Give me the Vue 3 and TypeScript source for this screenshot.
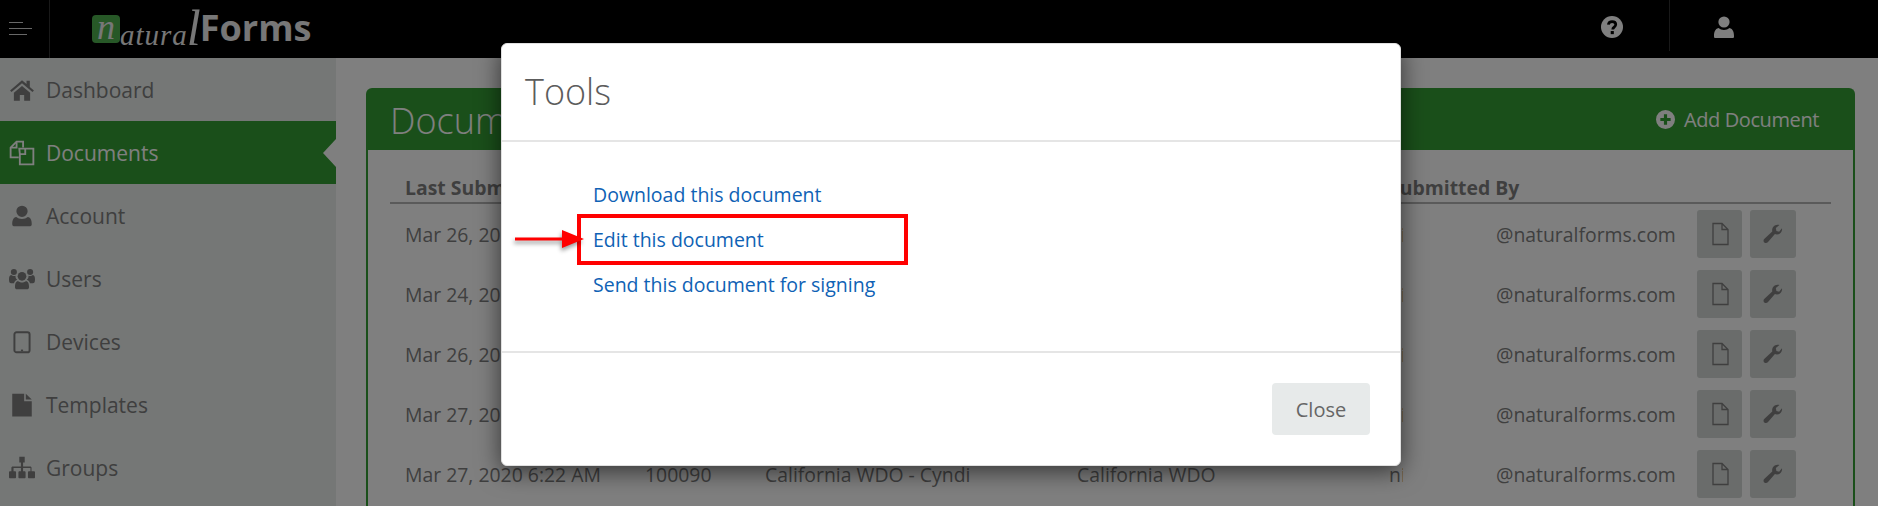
<script setup lang="ts">
interface NavItem {
  label: string
  icon: string
  active?: boolean
}

const navItems: NavItem[] = [
  { label: 'Dashboard', icon: 'home' },
  { label: 'Documents', icon: 'files', active: true },
  { label: 'Account', icon: 'user' },
  { label: 'Users', icon: 'users' },
  { label: 'Devices', icon: 'tablet' },
  { label: 'Templates', icon: 'file' },
  { label: 'Groups', icon: 'sitemap' },
]

const rows = [
  { date: 'Mar 26, 2020 9:14 AM', id: '100112', name: 'California WDO - Cyndi', template: 'California WDO' },
  { date: 'Mar 24, 2020 3:41 PM', id: '100104', name: 'California WDO - Cyndi', template: 'California WDO' },
  { date: 'Mar 26, 2020 8:07 AM', id: '100098', name: 'California WDO - Cyndi', template: 'California WDO' },
  { date: 'Mar 27, 2020 7:35 AM', id: '100093', name: 'California WDO - Cyndi', template: 'California WDO' },
  { date: 'Mar 27, 2020 6:22 AM', id: '100090', name: 'California WDO - Cyndi', template: 'California WDO' },
]
</script>

<template>
  <div class="page">
    <header class="topbar">
      <div class="burger">
        <span class="line short"></span>
        <span class="line"></span>
        <span class="line mid"></span>
      </div>
      <div class="logo">
        <span class="logo-n">n</span><span class="logo-script">atura<span class="logo-l">l</span></span><span class="logo-forms">Forms</span>
      </div>
      <div class="top-right">
        <svg class="help" viewBox="0 0 24 24">
          <circle cx="12" cy="12" r="12" fill="currentColor" />
          <path d="M8 9.400c.3-2.300 2-3.400 4.100-3.400 2.300 0 4 1.400 4 3.400 0 2.700-3.300 2.800-3.300 5.200" fill="none" stroke="#000" stroke-width="3" />
          <rect x="10.600" y="16.400" width="3.400" height="3.400" fill="#000" />
        </svg>
        <div class="top-user">
          <svg class="user-icon" viewBox="0 0 20 22">
            <circle cx="10" cy="6" r="5.600" fill="currentColor" />
            <path d="M1 22c-1 0-1-1-1-2 0-4 1-7 4.500-8 1.500 1.300 3.300 2 5.500 2s4-.7 5.500-2c3.500 1 4.500 4 4.500 8 0 1 0 2-1 2z" fill="currentColor" />
          </svg>
        </div>
      </div>
    </header>

    <div class="body">
      <aside class="sidebar">
        <a v-for="item in navItems" :key="item.label" class="nav-item" :class="{ active: item.active }">
          <svg class="nav-icon" viewBox="0 0 24 24">
            <path v-if="item.icon === 'home'" d="M12 3 1 12.400l1.300 1.500L12 5.800l9.700 8.100 1.300-1.500-3.800-3.200V3.500h-3v3zM4.500 14.500V22h5.500v-5.500h4V22h5.500v-7.500L12 8.200z" fill="currentColor" />
            <g v-else-if="item.icon === 'files'" fill="none" stroke="currentColor" stroke-width="1.700">
              <path d="M9 16H1.500V7L7 1.500h6V7" />
              <path d="M9.500 8H16l6.500 0V22.500H10V13z" />
              <path d="M7 2v5H2M15 8v5H10" />
            </g>
            <path v-else-if="item.icon === 'user'" d="M12 2.500a5.200 5.200 0 1 1 0 10.400 5.200 5.200 0 0 1 0-10.400zM5.500 21.500c-1.800 0-2.500-.8-2.500-2 0-3.500.8-6 3.700-6.600 1.400 1.200 3.200 1.800 5.300 1.800s3.900-.6 5.300-1.800c2.900.6 3.700 3.100 3.700 6.600 0 1.200-.7 2-2.500 2z" fill="currentColor" />
            <g v-else-if="item.icon === 'users'" fill="currentColor">
              <circle cx="12" cy="9.500" r="4" />
              <circle cx="4.500" cy="5.500" r="2.800" />
              <circle cx="19.500" cy="5.500" r="2.800" />
              <path d="M7.500 21.500c-1.200 0-2-.7-2-1.900 0-3 .6-5.300 2.800-5.800 1 .9 2.300 1.400 3.700 1.400s2.700-.5 3.700-1.400c2.200.5 2.800 2.800 2.800 5.800 0 1.200-.8 1.900-2 1.900z" />
              <path d="M0 12.500c0-2.500.4-4 2-4.300.7.700 1.600 1 2.500 1 .6 0 1 0 1.500-.2-.2 1.700.6 3 1.600 3.800-1.500.6-2.500 1.500-3 3.200H2c-1.300 0-2-.8-2-3.500z" />
              <path d="M24 12.500c0-2.500-.4-4-2-4.300-.7.700-1.600 1-2.500 1-.6 0-1 0-1.500-.2.200 1.700-.6 3-1.600 3.800 1.500.6 2.500 1.500 3 3.200h2.600c1.300 0 2-.8 2-3.500z" />
            </g>
            <g v-else-if="item.icon === 'tablet'">
              <rect x="5" y="3" width="14" height="18.500" rx="2" fill="none" stroke="currentColor" stroke-width="1.800" />
              <rect x="11" y="19" width="2" height="1.500" fill="currentColor" />
            </g>
            <path v-else-if="item.icon === 'file'" d="M3 1.500h11v7h7v14H3zM15.500 1.500 21 7h-5.500z" fill="currentColor" />
            <path v-else-if="item.icon === 'sitemap'" d="M9.500 1.500h5v5.500h-1.500v3.500h6.500c.8 0 1.300.5 1.300 1.300v3.200H23c.6 0 1 .4 1 1v4.500c0 .6-.4 1-1 1h-4.500c-.6 0-1-.4-1-1V16c0-.6.4-1 1-1h1.300v-3H13v3h1.300c.6 0 1 .4 1 1v4.500c0 .6-.4 1-1 1H9.700c-.6 0-1-.4-1-1V16c0-.6.4-1 1-1H11v-3H4.200v3h1.300c.6 0 1 .4 1 1v4.500c0 .6-.4 1-1 1H1c-.6 0-1-.4-1-1V16c0-.6.4-1 1-1h1.200v-3.200c0-.8.5-1.300 1.300-1.300H11V7H9.500z" fill="currentColor" />
          </svg>
          <span>{{ item.label }}</span>
        </a>
      </aside>

      <main class="main">
        <section class="card">
          <div class="card-head">
            <h1>Documents</h1>
            <a class="add-doc">
              <svg class="plus" viewBox="0 0 24 24">
                <path d="M12 0a12 12 0 1 1 0 24 12 12 0 0 1 0-24zM10 5.500v4.500H5.500v4H10v4.500h4V14h4.500v-4H14V5.500z" fill="currentColor" fill-rule="evenodd" />
              </svg>
              Add Document
            </a>
          </div>
          <div class="card-body">
            <div class="table-head">
              <span>Last Submitted</span>
              <span>Form ID</span>
              <span>Name</span>
              <span>Template</span>
              <span>Submitted By</span>
            </div>
            <div v-for="row in rows" :key="row.id" class="table-row">
              <span>{{ row.date }}</span>
              <span>{{ row.id }}</span>
              <span>{{ row.name }}</span>
              <span>{{ row.template }}</span>
              <span class="by"><span class="by-name">ni</span>@naturalforms.com</span>
              <span class="actions">
                <button class="act">
                  <svg class="act-icon" viewBox="0 0 20 24">
                    <path d="M3 1.500h9l6 6v15H3zM12 1.500v6h6" fill="none" stroke="currentColor" stroke-width="1.300" />
                  </svg>
                </button>
                <button class="act wide">
                  <svg class="act-icon" viewBox="0 0 24 24">
                    <path d="M21.800 5.600c.6 3.600-1.800 6.900-5.600 6.900-.8 0-1.500-.2-2.100-.4L6.300 21c-1 1.100-2.700 1.200-3.800.2-1.100-1-1.100-2.700-.1-3.800l8.800-8.100c-.7-3.600 1.600-7 5.800-7.300.7 0 1.400.1 2 .3l-3.900 3.100.6 3.200 3 1z" fill="currentColor" />
                  </svg>
                </button>
              </span>
            </div>
          </div>
        </section>
      </main>
    </div>

    <div class="backdrop"></div>

    <div class="modal">
      <div class="modal-head">Tools</div>
      <div class="modal-body">
        <a class="tool-link">Download this document</a>
        <a class="tool-link">Edit this document</a>
        <a class="tool-link">Send this document for signing</a>
        <div class="mark-box"></div>
        <svg class="mark-arrow" viewBox="0 0 70 24">
          <path d="M0 10.500h47V3l22 9-22 9v-7.500H0z" fill="#f00" />
        </svg>
      </div>
      <div class="modal-foot">
        <button class="close-btn">Close</button>
      </div>
    </div>
  </div>
</template>

<style>
html,
body {
  margin: 0;
  overflow: hidden;
}
</style>

<style scoped>
.page {
  position: relative;
  height: 100vh;
  overflow: hidden;
  background: #fff;
  color: #7e7e7e;
  font-family: 'Open Sans', 'Liberation Sans', sans-serif;
  font-size: 19.4px;
}

.topbar {
  display: flex;
  align-items: stretch;
  height: 58px;
  background: #000;
  color: #fff;
}

.burger {
  display: flex;
  flex-direction: column;
  gap: 5px;
  width: 50px;
  height: 58px;
  padding: 22px 0 0 9px;
  box-sizing: border-box;
  border-right: 1px solid #333;
}

.line {
  display: block;
  width: 23px;
  height: 1px;
  background: #d0d0d0;
}

.line.short {
  width: 14px;
}

.line.mid {
  width: 18px;
}

.logo {
  display: flex;
  align-items: center;
  margin-left: 42px;
  height: 58px;
  padding-bottom: 2px;
  box-sizing: border-box;
}

.logo-n {
  width: 28px;
  height: 28px;
  margin-top: 2px;
  border-radius: 4px;
  background: #4fb04f;
  color: #eee;
  font: italic 400 36px/24px 'Liberation Serif', serif;
  text-align: center;
}

.logo-script {
  font: italic 400 29px/28px 'Liberation Serif', serif;
  letter-spacing: 1px;
  color: #eee;
  margin-top: 6px;
}

.logo-l {
  display: inline-block;
  font-size: 50px;
  line-height: 28px;
  margin: 0 -2px 0 -1px;
}

.logo-forms {
  font: 700 36px/40px 'Open Sans', sans-serif;
  color: #eee;
}

.top-right {
  display: flex;
  margin-left: auto;
}

.help {
  width: 22px;
  height: 22px;
  margin: 16px 46px 0 0;
}

.top-user {
  width: 209px;
  height: 51px;
  border-left: 1px solid #333;
  box-sizing: border-box;
}

.user-icon {
  display: block;
  width: 20px;
  height: 22px;
  margin: 16px 0 0 44px;
}

.body {
  display: flex;
  height: 448px;
}

.sidebar {
  width: 336px;
  flex: none;
  background: #eaeeec;
}

.nav-item {
  position: relative;
  display: flex;
  align-items: center;
  gap: 11px;
  height: 63px;
  padding-left: 9px;
  font-size: 21px;
  color: #7e7e7e;
}

.nav-item.active {
  background: #349f34;
  color: #fff;
}

.nav-item.active::after {
  content: '';
  position: absolute;
  right: 0;
  top: 18px;
  border-style: solid;
  border-width: 14px 13px 14px 0;
  border-color: transparent #fff transparent transparent;
}

.nav-icon {
  width: 26px;
  height: 26px;
  flex: none;
}

.main {
  flex: 1;
  padding: 30px 23px 0 30px;
  min-width: 0;
}

.card {
  border: 2px solid #349f34;
  border-radius: 6px 6px 0 0;
  border-bottom: none;
  height: 500px;
}

.card-head {
  display: flex;
  align-items: center;
  justify-content: space-between;
  height: 60px;
  padding: 0 34px 0 22px;
  background: #349f34;
  color: #fff;
}

.card-head h1 {
  margin: 0;
  font-size: 36px;
  font-weight: 300;
}

.add-doc {
  display: flex;
  align-items: center;
  gap: 9px;
  padding-bottom: 2px;
  font-size: 20px;
  letter-spacing: -0.4px;
}

.plus {
  width: 19px;
  height: 19px;
}

.card-body {
  padding: 23px 22px 0 22px;
}

.table-head,
.table-row {
  display: grid;
  grid-template-columns: 240px 120px 312px 312px 1fr auto;
  align-items: center;
  padding-left: 15px;
}

.table-head {
  height: 29px;
  border-bottom: 2px solid #b5b5b5;
  font-weight: 700;
  color: #7e7e7e;
}

.table-row {
  height: 60px;
  padding-right: 35px;
  white-space: nowrap;
}

.by {
  display: flex;
  white-space: nowrap;
}

.by-name {
  width: 14px;
  margin-right: 93px;
  overflow: hidden;
}

.actions {
  display: flex;
  gap: 8px;
}

.act {
  display: flex;
  align-items: center;
  justify-content: center;
  width: 45px;
  height: 48px;
  padding: 0;
  border: none;
  border-radius: 3px;
  background: #d4d8d6;
  color: #7e7e7e;
}

.act.wide {
  width: 46px;
}

.act-icon {
  width: 22px;
  height: 24px;
}

.backdrop {
  position: absolute;
  inset: 0;
  background: rgba(0, 0, 0, 0.5);
}

.modal {
  position: absolute;
  left: 501px;
  top: 43px;
  width: 900px;
  box-sizing: border-box;
  border: 1px solid #e0e0e0;
  border-radius: 6px;
  background: #fff;
  box-shadow: 0 5px 24px rgba(0, 0, 0, 0.6);
  color: #666;
}

.modal-head {
  height: 96px;
  padding: 0 23px;
  font-size: 36px;
  font-weight: 300;
  line-height: 96px;
  border-bottom: 2px solid #e5e5e5;
  color: #5c5c5c;
}

.modal-body {
  position: relative;
  display: flex;
  flex-direction: column;
  height: 211px;
  padding: 30px 0 0 91px;
  box-sizing: border-box;
  border-bottom: 2px solid #e5e5e5;
}

.tool-link {
  height: 45px;
  font-size: 19.500px;
  line-height: 45px;
  color: #0f62b5;
}

.mark-box {
  position: absolute;
  left: 75px;
  top: 72px;
  width: 331px;
  height: 51px;
  box-sizing: border-box;
  border: 4px solid #f00;
}

.mark-arrow {
  position: absolute;
  left: 13px;
  top: 85px;
  width: 70px;
  height: 24px;
  filter: drop-shadow(-1px 3px 2px rgba(0, 0, 0, 0.4));
}

.modal-foot {
  display: flex;
  justify-content: flex-end;
  height: 112px;
  padding: 30px 30px 0 0;
  box-sizing: border-box;
}

.close-btn {
  width: 98px;
  height: 52px;
  border: none;
  border-radius: 4px;
  background: #e7eaea;
  color: #666;
  font: 400 20px 'Open Sans', sans-serif;
}
</style>
